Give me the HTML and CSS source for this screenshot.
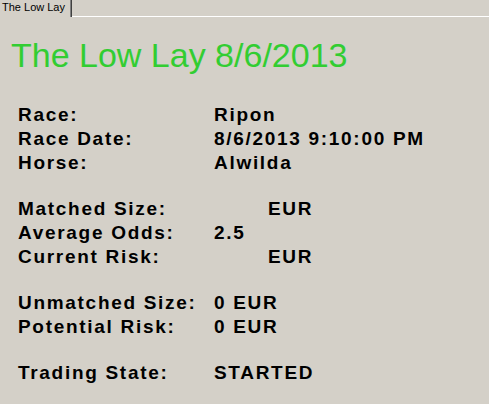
FILE: index.html
```html
<!DOCTYPE html>
<html>
<head>
<meta charset="utf-8">
<link rel="stylesheet" href="styles.css">
</head>
<body>
<div class="tabbar">
  <div class="tab">The Low Lay</div>
  <div class="tabfill"></div>
</div>
<div class="content">
  <h1 class="title">The Low Lay 8/6/2013</h1>
  <div class="group g1">
    <div class="row"><span class="label">Race:</span><span class="value">Ripon</span></div>
    <div class="row"><span class="label">Race Date:</span><span class="value">8/6/2013 9:10:00 PM</span></div>
    <div class="row"><span class="label">Horse:</span><span class="value">Alwilda</span></div>
  </div>
  <div class="group">
    <div class="row"><span class="label">Matched Size:</span><span class="value indent">EUR</span></div>
    <div class="row"><span class="label">Average Odds:</span><span class="value">2.5</span></div>
    <div class="row"><span class="label">Current Risk:</span><span class="value indent">EUR</span></div>
  </div>
  <div class="group">
    <div class="row"><span class="label">Unmatched Size:</span><span class="value">0 EUR</span></div>
    <div class="row"><span class="label">Potential Risk:</span><span class="value">0 EUR</span></div>
  </div>
  <div class="group">
    <div class="row"><span class="label">Trading State:</span><span class="value">STARTED</span></div>
  </div>
</div>
</body>
</html>
```

FILE: styles.css
```css
html, body {
  margin: 0;
  padding: 0;
  background: #d4d0c8;
  width: 489px;
  height: 404px;
  overflow: hidden;
}

.tabbar {
  display: flex;
  height: 17px;
}

.tab {
  box-sizing: border-box;
  width: 72px;
  height: 17px;
  padding: 0 0 0 2px;
  font-family: "Liberation Sans", Arial, sans-serif;
  font-size: 11px;
  line-height: 15px;
  color: #000;
  border-right: 1px solid #404040;
  box-shadow: inset -1px 0 0 #808080;
  white-space: nowrap;
}

.tabfill {
  flex: 1;
  box-sizing: border-box;
  height: 17px;
  border-bottom: 1px solid #ffffff;
}

.content {
  padding: 19px 0 0 11px;
}

.title {
  margin: 0;
  font-family: "Liberation Sans", Arial, sans-serif;
  font-weight: normal;
  font-size: 34px;
  line-height: 39px;
  color: #32cd32;
  white-space: nowrap;
}

.group {
  margin-top: 22px;
  padding-left: 7px;
}

.group.g1 {
  margin-top: 28px;
}

.row {
  display: flex;
  height: 24px;
  font-family: "Liberation Sans", Arial, sans-serif;
  font-weight: bold;
  font-size: 19px;
  line-height: 24px;
  letter-spacing: 1.7px;
  color: #000;
  white-space: nowrap;
}

.label {
  width: 196px;
  flex: none;
}

.value.indent {
  padding-left: 54px;
}
```
